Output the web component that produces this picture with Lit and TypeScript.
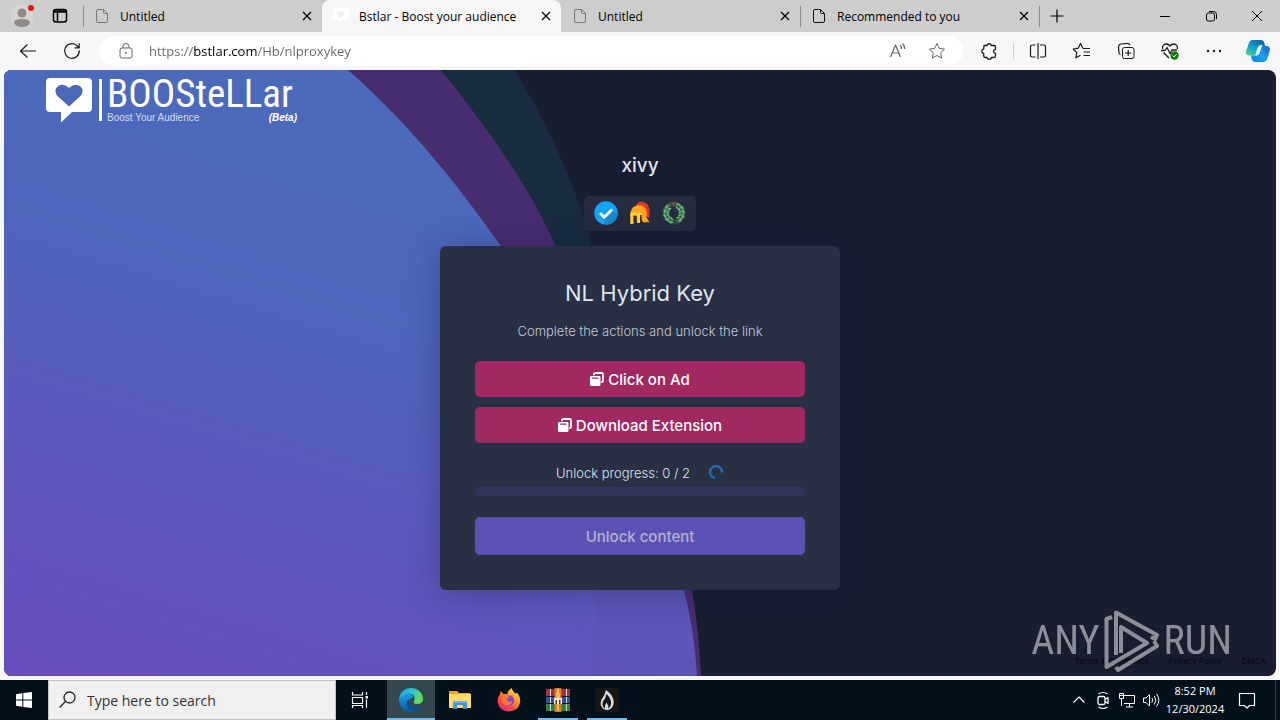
import { LitElement, html, css, svg } from "lit";
import { customElement } from "lit/decorators.js";
import { classMap } from "lit/directives/class-map.js";

const line = (body: unknown, size = 20) => html`
  <svg class="line" width=${size} height=${size} viewBox="0 0 ${size} ${size}" aria-hidden="true">${body}</svg>`;

const icons = {
  file: line(svg`<path d="M2.500 3a1.500 1.500 0 0 1 1.500-1.500h5.500l4 4V13a1.500 1.500 0 0 1-1.500 1.500H4A1.500 1.500 0 0 1 2.500 13zM9.500 1.500V4.500a1 1 0 0 0 1 1H13.500"/>`, 16),
  close: line(svg`<path d="M4 4l8 8M12 4l-8 8" stroke-width="1.200"/>`, 16),
  workspace: line(svg`<rect x="1.500" y="1.500" width="13" height="12.500" rx="2.500" stroke-width="1.500"/><path d="M2 3.500h12" stroke-width="2.500"/><path d="M5.500 4v10" stroke-width="1.500"/>`, 16),
  plus: line(svg`<path d="M8 1.500v13M1.500 8h13" stroke-width="1.200"/>`, 16),
  minimize: line(svg`<path d="M3 8.500h10"/>`, 16),
  restore: line(svg`<rect x="3.500" y="5" width="8" height="8" rx="2"/><path d="M6 3.500h4.500a3 3 0 0 1 3 3V11"/>`, 16),
  windowClose: line(svg`<path d="M3 3l10 10M13 3L3 13"/>`, 16),
  back: line(svg`<path d="M18 10H3M9.500 3.500L2.500 10l7 6.500" stroke-width="1.200"/>`),
  reload: line(svg`<path d="M17.200 9.200A7.300 7.300 0 1 1 14.500 4.300L17.200 6.800M17.200 2.200v4.600h-4.600" stroke-width="1.200"/>`),
  lock: line(svg`<rect x="4" y="7" width="12" height="10" rx="2"/><path d="M7 7V5.500a3 3 0 0 1 6 0V7"/><circle cx="10" cy="12" r="1" fill="currentColor" stroke="none"/>`),
  readAloud: line(svg`<path d="M2.500 16L7.500 4l5 12M4.200 12h6.600M12 4a5 5 0 0 1 1.500 4M14.500 2.500A8 8 0 0 1 16.800 8" stroke-width="1.200"/>`),
  star: line(svg`<path d="M10 2.500l2.300 4.900 5.300.7-3.900 3.700 1 5.300-4.700-2.600-4.700 2.600 1-5.300L2.400 8.100l5.300-.7z"/>`),
  puzzle: line(svg`<path d="M5 4.500h3a2.200 2.200 0 0 1 4.300 0H15a1.500 1.500 0 0 1 1.500 1.500v2.300a2 2 0 0 0-1 3.700l1 .3v2.700a1.500 1.500 0 0 1-1.500 1.500h-2.500a2.300 2.300 0 0 1-4.500 0H6A1.500 1.500 0 0 1 4.700 15v-2.500a2.400 2.400 0 0 1 0-4.700z" stroke-width="1.300"/>`),
  split: line(svg`<path d="M7.500 4H4a1.500 1.500 0 0 0-1.500 1.500v9A1.500 1.500 0 0 0 4 16h3.500M12 4h4a1.500 1.500 0 0 1 1.500 1.500v9A1.500 1.500 0 0 1 16 16h-4M10 2v16" stroke-width="1.200"/>`),
  favorites: line(svg`<path d="M11 7.500L8.500 2.500 6.200 7.200l-5 .8 3.600 3.600-.9 5.200 4.600-2.500M11 7.500h7M11.500 11h6.500M11.500 14.500h6.500" stroke-width="1.200"/>`),
  collections: line(svg`<rect x="6.500" y="6.500" width="11.500" height="11" rx="2"/><path d="M12.200 9v6M9.200 12h6M4.500 13.500A2.500 2.500 0 0 1 3 11.500L2.500 6A3 3 0 0 1 5 3l6-.6A2.500 2.500 0 0 1 13.800 4" stroke-width="1.200"/>`),
  health: line(svg`<path d="M2.700 8C1.800 5 4 3 6.300 3 8 3 9.200 4 10 5c.8-1 2-2 3.700-2C16 3 18.200 5 17.300 8M3.500 11.500L9 17M1 9.500h4l2-3 3 6 2-3.500h5" stroke-width="1.300"/><circle cx="14.500" cy="14.500" r="4.200" fill="#107c10" stroke="none"/><path d="M12.600 14.600l1.400 1.300 2.400-2.600" stroke="#fff"/>`),
  more: line(svg`<g fill="currentColor" stroke="none"><circle cx="4" cy="10" r="1.200"/><circle cx="10" cy="10" r="1.200"/><circle cx="16" cy="10" r="1.200"/></g>`),
  windows: line(svg`<g fill="#fff" stroke="none"><path d="M2 4.200L8.300 3.200V9.500H2zM9.300 3L18 2v7.500H9.300zM2 10.500h6.300v6.300L2 15.800zM9.300 10.500H18V18l-8.700-1z"/></g>`),
  search: line(svg`<circle cx="11.500" cy="7.500" r="5.500" stroke-width="1.300"/><path d="M7.500 11.500L1.500 17.500" stroke-width="1.300"/>`),
  taskView: line(svg`<path d="M2.500 2v3h10V2M2.500 18v-2.500h10V18M2.500 7.500h10v6h-10zM16.500 2v3M16.500 9.500V18" stroke-width="1.200"/><rect x="15.500" y="6" width="2.500" height="2.500" fill="#fff" stroke="none"/>`),
  chevron: line(svg`<path d="M4.500 12.500L10 7l5.500 5.500" stroke-width="1.200"/>`),
  camera: line(svg`<rect x="5" y="6.500" width="7" height="8" rx="1.500" stroke-width="1.300"/><path d="M12 9.500l3-2v6l-3-2M5.500 4q4.500-3 9 0M5.500 17q4.500 3 9 0" stroke-width="1.200"/>`),
  network: line(svg`<path d="M7 5.500h10.500v8H7M12.500 13.500V17M9 17h7M4.500 8.500V16" /><rect x="2.500" y="3.500" width="4" height="5"/><path d="M3 5.500h3"/>`),
  volume: line(svg`<path d="M2.500 8v4.500H5l3.500 3.500V4.500L5 8zM11 8q1.500 2.200 0 4.500M13.300 6q3 4.200 0 8.500M15.600 4q4.500 6.200 0 12.500"/>`),
  message: line(svg`<path d="M2.500 3.500h15v12h-4.800L10 18l-2.700-2.500H2.500z" stroke-width="1.200"/>`),
};

const copilot = html`
  <svg width="26" height="26" viewBox="0 0 26 26" aria-hidden="true">
    <defs>
      <linearGradient id="cpa" x1="0" y1="1" x2=".7" y2="0"><stop stop-color="#5fd38a"/><stop offset=".45" stop-color="#16a9c9"/><stop offset="1" stop-color="#0a64ad"/></linearGradient>
      <linearGradient id="cpb" x1="1" y1="0" x2="0" y2="1"><stop stop-color="#1b5fd0"/><stop offset=".5" stop-color="#1fa0f0"/><stop offset="1" stop-color="#0d83df"/></linearGradient>
    </defs>
    <path fill="url(#cpa)" d="M8 2h8q2.500 0 3.300 3l.8 3H16q-2.500 0-3.300 3L11 17.500H4.500Q0 17.500 1.300 12.500L4 4.800Q5 2 8 2z"/>
    <path fill="url(#cpb)" d="M18 24h-8q-2.500 0-3.300-3L6 17.500h4q2.500 0 3.300-3L15.500 8H21q4.800 0 3.700 5l-2.500 8Q21 24 18 24z"/>
    <path fill="#e8f8ff" d="M13 9q.9-2 3-2h1.500l-3 8q-.9 2.500-3 2.500H10z"/>
  </svg>`;

const adIcon = html`
  <svg width="14" height="14" viewBox="0 0 14 14" aria-hidden="true">
    <path d="M4 3.300V2.300A1.300 1.300 0 0 1 5.300 1h6.400A1.300 1.300 0 0 1 13 2.300v6.400A1.300 1.300 0 0 1 11.700 10h-.5" fill="none" stroke="#fff" stroke-width="1.800"/>
    <path fill="#fff" fill-rule="evenodd" d="M1.500 4h7.600q1.400 0 1.400 1.400v7.100q0 1.500-1.400 1.500H1.500Q0 14 0 12.500V5.400Q0 4 1.500 4zM2 5.600v1.200h6.500V5.600z"/>
  </svg>`;

const badges = [
  html`<svg width="24" height="24" viewBox="0 0 24 24" role="img" aria-label="Verified"><circle cx="12" cy="12" r="11.700" fill="#15a4f5"/><path d="M23.700 12A11.700 11.700 0 0 1 12 23.700L9.500 17.500 19 9z" fill="#168bd0"/><path d="M6 12l4.300 4.200L18 8.500" fill="none" stroke="#fff" stroke-width="2.800"/></svg>`,
  html`<svg width="24" height="24" viewBox="0 0 24 24" role="img" aria-label="Warrior">
    <path d="M8 4.500Q10 .3 14 .5q7 1 7.500 9 .3 5-.5 8l-2-3z" fill="#d83a28"/>
    <path d="M8 4.500Q14 2 17.500 6.500 20 10 19.500 17L17 13z" fill="#f26a26"/>
    <path d="M2.500 23V11.500Q3.500 4.500 10.500 4.500q6.500.3 7.500 7.500l.5 4.500 3 4.500-6 .5-2-3V12.500H10v5L8.500 19v-5H5.500v8.500z" fill="#ffa51f"/>
    <path d="M2.500 11.500h4.800l2.700 2V12h4v4h-2v6H9v-7H5.500v7.500l-3 .5z" fill="#ffd42e"/>
    <path d="M5.500 14.500h3V21h-3zM12 14h1.500v7H12z" fill="#3a3138"/>
  </svg>`,
  html`<svg width="24" height="24" viewBox="0 0 24 24" role="img" aria-label="Laurel">
    <circle cx="12" cy="12" r="9" fill="none" stroke="#394a45" stroke-width="5"/>
    <circle cx="12" cy="3" r="2" fill="#6f4a45"/>
    <path d="M9 20.500Q2.500 17 4 10 5 6 8 3.500M15 20.500Q21.500 17 20 10 19 6 16 3.500" fill="none" stroke="#2f8f55" stroke-width="1.500"/>
    <g fill="#6cb87c">${[-150, -122, -94, -66, -38, 38, 66, 94, 122, 150].map(
      (a) => svg`<g transform="rotate(${a} 12 12)"><ellipse cx="10" cy="2.600" rx="2.300" ry="1" transform="rotate(-25 10 2.600)"/><ellipse cx="11" cy="6" rx="1.900" ry=".9" transform="rotate(25 11 6)"/></g>`
    )}</g>
  </svg>`,
];

const apps = [
  { name: "Microsoft Edge", state: "active", art: svg`
    <defs>
      <linearGradient id="ed1" x1="0" y1="0" x2="1" y2=".4"><stop stop-color="#1b9de2"/><stop offset=".5" stop-color="#2fc2d8"/><stop offset="1" stop-color="#62dc5a"/></linearGradient>
      <linearGradient id="ed2" x1="0" y1="0" x2="0" y2="1"><stop stop-color="#1ba0e8"/><stop offset="1" stop-color="#0c59a4"/></linearGradient>
    </defs>
    <path fill="url(#ed2)" d="M0 12Q1 6 7 5.500q7-.5 7.500 5-2-2-4 1.500-1 6 5 7 3 .4 6.500-1.500Q18 24.500 11 24 1 23 0 12z"/>
    <path fill="#0d4d8e" d="M8 12q-2 9 6 11.500Q19 23 22 17.500q-3.500 2-6.500 1.500-5-1-5-7z"/>
    <path fill="url(#ed1)" d="M0 12Q1 0 12.500 0 22 .5 24 10q.5 6-6 6-4.500 0-3-3 2.500-6.500-5-7.500Q3 5.500 0 12z"/>` },
  { name: "File Explorer", state: "", art: svg`
    <path fill="#e9a92b" d="M1 3h8l2 2h11v14H1z"/><path fill="#ffd869" d="M1 6h22v14H1z"/>
    <path fill="#3d96d8" d="M5 13h14v8h-4v-4H9v4H5z"/><path fill="#65b5ea" d="M5 13h14v2H5z"/>` },
  { name: "Firefox", state: "", art: svg`
    <defs><linearGradient id="ff" x1=".9" y1="0" x2=".2" y2="1"><stop stop-color="#fff04a"/><stop offset=".4" stop-color="#ff9a20"/><stop offset=".7" stop-color="#ff4a45"/><stop offset="1" stop-color="#e3247e"/></linearGradient></defs>
    <path fill="url(#ff)" d="M3.500 3l3 3h4q0-3 4-6 1 3.500 4 5.500l2-.5Q24 10 23 15q-2 8-11 8.500Q2 23 .7 14 .3 9 3 6.500z"/>
    <circle cx="12" cy="12.500" r="5.200" fill="#8146d8"/><path fill="#ff7a2b" d="M5 9q5-3 7.500 0L9.500 11q1 4 6 2-2 6-8 3.500Q4.500 14 5 9z"/>` },
  { name: "WinRAR", state: "running", art: svg`
    <path fill="#a62c40" d="M0 1h24v7H0z"/><path fill="#334e9e" d="M0 9h24v6H0z"/><path fill="#2f7f3d" d="M0 16h24v7H0z"/>
    <path stroke="#d8d8c8" d="M4.500 1v22M20.500 1v22" stroke-width="1"/><path stroke="#101820" d="M0 8.500h24M0 15.500h24"/>
    <path fill="#d97d26" d="M8.500 0h7v24h-7z"/><path fill="#f0bb62" d="M11 1h2v22h-2z"/>
    <path fill="#f5ead0" d="M8 10h8v6H8z"/><path fill="#5a3518" d="M9.500 12H11v4H9.500zM13 12h1.500v4H13z"/><path fill="#f0bb62" d="M10 5h4v5h-4z"/>` },
  { name: "Flame", state: "running", art: svg`
    <rect width="24" height="24" fill="#161616"/>
    <path fill="#d9d9d9" d="M11 2Q17 6 18.500 12q1 6-3 9-3.500 2-7 0-4.500-4-2-9.500Q10 7 11 2z"/>
    <path fill="#161616" d="M11.500 6Q16 10 16 15q0 4-3 5.500 1-3-1.500-6-2 2-1.500 6-3.500-2.500-2-7 3-4 3.500-7.500z"/>` },
];

const tabs = [
  { title: "Untitled", active: false, muted: true },
  { title: "Bstlar - Boost your audience", active: true, muted: false },
  { title: "Untitled", active: false, muted: true },
  { title: "Recommended to you", active: false, muted: false },
];

@customElement("app-root")
export class AppRoot extends LitElement {
  static styles = css`
    :host {
      display: flex;
      flex-direction: column;
      min-height: 100vh;
      background: #f7f7f7;
      font-family: "Open Sans", "Noto Sans", sans-serif;
      font-size: 12px;
      color: #000;
    }
    * { box-sizing: border-box; }
    button, input { font: inherit; color: inherit; border: 0; background: none; padding: 0; margin: 0; outline: 0; }
    button { display: flex; align-items: center; justify-content: center; flex: none; }
    svg { display: block; flex: none; }
    .line { fill: none; stroke: currentColor; stroke-width: 1; stroke-linejoin: round; }

    .strip { display: flex; height: 32px; background: #cdcdcd; }
    .profile { width: 44px; }
    .workspaces { width: 32px; }
    .tabs { display: flex; flex: 1; min-width: 0; padding-left: 7px; }
    .tab { flex: 0 1 239px; min-width: 0; display: flex; align-items: center; gap: 10px; padding: 0 7px 0 10px; border-left: 1px solid transparent; }
    .tab.ruled { border-image: linear-gradient(transparent 20%, #8b8b8b 20% 82%, transparent 82%) 1; }
    .tab.active { background: #f7f7f7; border-radius: 8px 8px 0 0; }
    .tab-title { flex: 1; overflow: hidden; white-space: nowrap; }
    .tab-icon { color: #111; }
    .tab-icon.muted { color: #777; }
    .new-tab { width: 35px; border-left: 1px solid; border-image: linear-gradient(transparent 20%, #8b8b8b 20% 82%, transparent 82%) 1; }
    .control { width: 46px; }

    .toolbar { display: flex; align-items: center; height: 38px; padding-left: 6px; color: #1a1a1a; }
    .tool { width: 44px; height: 32px; }
    .copilot { width: 44px; }
    .address { flex: 1; display: flex; align-items: center; height: 30px; margin: 0 4px 0 6px; padding: 0 16px; border-radius: 15px; background: #fff; color: #666; }
    .url {
      flex: 1; min-width: 0; height: 24px; margin-left: 13px; font-size: 13px;
      color: transparent; -webkit-background-clip: text; background-clip: text;
      background-image: linear-gradient(90deg, #666 45px, #000 45px 108px, #666 108px);
    }
    .address button + button { margin-left: 19px; }
    .rule { width: 1px; height: 16px; margin: 0 2px; background: #ccc; }

    .page { flex: 1; display: grid; margin: 0 4px 4px; border-radius: 8px; overflow: hidden; background: #181d30; position: relative; font-family: Inter, "Open Sans", sans-serif; color: #dfe3ee; }
    .backdrop { grid-area: 1 / 1; width: 100%; height: 100%; min-height: 0; contain: size; }
    .content { grid-area: 1 / 1; display: flex; flex-direction: column; align-items: center; }
    .brand { align-self: flex-start; display: flex; height: 60px; margin-left: 41px; padding-top: 8px; gap: 4px; color: #fff; text-decoration: none; }
    .brand-text { display: flex; flex-direction: column; width: 190px; }
    .brand-name { height: 34px; font: 39px/32px "Roboto Condensed", "Liberation Sans Narrow", "DejaVu Sans Condensed", sans-serif; }
    .brand-sub { display: flex; justify-content: space-between; font: 10px/12px "Liberation Sans", sans-serif; color: #d5dcf2; }
    .beta { font-style: italic; font-weight: bold; color: #fff; }
    .user { margin: 20px 0 0; height: 32px; font-size: 19px; line-height: 32px; font-weight: 500; }
    .badges { display: flex; gap: 10px; margin: 14px 0 15px; padding: 5px 10px 6px; border-radius: 5px; background: #272b40; }
    .card { width: 400px; max-width: 100%; padding: 31px 35px 35px; border-radius: 6px; background: #293044; box-shadow: 0 4px 32px rgba(20, 24, 60, .35); text-align: center; }
    .card h2 { margin: 0 0 12px; font-size: 22px; line-height: 32px; font-weight: 400; }
    .card p { margin: 0 0 20px; font-size: 13px; line-height: 20px; font-weight: 300; color: #c3c8d6; }
    .action { width: 100%; height: 36px; margin-bottom: 10px; gap: 4px; border-radius: 5px; background: #9f2960; color: #fff; font-size: 15px; font-weight: 500; }
    .status { display: flex; align-items: center; justify-content: center; gap: 18px; height: 20px; margin-top: 20px; font-size: 13px; font-weight: 300; }
    progress { display: block; width: 100%; height: 9px; margin: 4px 0 21px; appearance: none; -webkit-appearance: none; border: 0; }
    progress::-webkit-progress-bar { background: #33345b; border-radius: 4px; }
    progress::-webkit-progress-value { background: #5d53b4; }
    .unlock { width: 100%; height: 38px; border-radius: 5px; background: #5b52b3; color: #b3b0cf; font-size: 15px; font-weight: 500; }
    .footer { grid-area: 1 / 1; align-self: end; justify-self: end; display: flex; gap: 20px; padding: 0 10px 10px 0; font-size: 8px; line-height: 10px; }
    .footer a { color: #05060c; text-decoration: none; }
    .watermark { position: absolute; right: 44px; bottom: 4px; display: flex; align-items: center; gap: 4px; color: #fff; opacity: .5; font: 40px/62px "Roboto Condensed", "Liberation Sans Narrow", "DejaVu Sans Condensed", sans-serif; }

    .taskbar { display: flex; height: 40px; background: #02101c; color: #fff; }
    .start { width: 48px; }
    .search { display: flex; align-items: center; gap: 9px; flex: 0 1 288px; padding-left: 9px; background: #f0f0f0; border: 1px solid #c4c4bc; color: #222; }
    .search input { flex: 1; min-width: 0; height: 30px; font-size: 14px; }
    .search input::placeholder { color: #333; opacity: 1; }
    .task-view { width: 48px; }
    .apps { display: flex; gap: 1px; margin-left: 3px; flex: 1; }
    .app { width: 48px; height: 40px; }
    .app.active { background: #34494f linear-gradient(#76b9ed, #76b9ed) bottom / 100% 2px no-repeat; }
    .app.running { background: linear-gradient(#76b9ed, #76b9ed) bottom / 40px 2px no-repeat; }
    .tray { display: flex; align-items: center; margin-right: 4px; padding-right: 8px; border-right: 1px solid #34404a; }
    .tray-item { width: 24px; height: 40px; }
    .clock { width: 64px; flex-direction: column; height: 40px; font-size: 11px; line-height: 18px; white-space: nowrap; }
    .notice { width: 40px; height: 40px; }
  `;

  render() {
    return html`
      <header class="strip">
        <button class="profile" aria-label="Profile">
          <svg width="28" height="28" viewBox="0 0 28 28" aria-hidden="true"><circle cx="14" cy="14" r="11.500" fill="#d8d4d1"/><circle cx="14" cy="11" r="4.500" fill="#8e8a87"/><path d="M6 21q0-4 8-4t8 4q-2 4-8 4t-8-4z" fill="#8e8a87"/><circle cx="23" cy="6" r="3" fill="#e3141e"/></svg>
        </button>
        <button class="workspaces" aria-label="Tab actions">${icons.workspace}</button>
        <nav class="tabs" aria-label="Tabs">
          ${tabs.map((t, i) => html`
            <div class=${classMap({ tab: true, active: t.active, ruled: i === 0 || i === 3 })}>
              ${t.active
                ? html`<svg width="16" height="16" viewBox="0 0 16 16" aria-hidden="true"><path d="M1 0h14q1 0 1 1v10q0 1-1 1H9l-4 4v-4H1q-1 0-1-1V1q0-1 1-1z" fill="#fff"/><path d="M8 9.500L4 5.500q0-3 4-1.500 4-1.500 4 1.500z" fill="#f0f0f0"/></svg>`
                : html`<span class="tab-icon ${t.muted ? "muted" : ""}">${icons.file}</span>`}
              <span class="tab-title">${t.title}</span>
              <button aria-label="Close tab">${icons.close}</button>
            </div>`)}
          <button class="new-tab" aria-label="New tab">${icons.plus}</button>
        </nav>
        <button class="control" aria-label="Minimize">${icons.minimize}</button>
        <button class="control" aria-label="Restore">${icons.restore}</button>
        <button class="control" aria-label="Close window">${icons.windowClose}</button>
      </header>

      <div class="toolbar">
        <button class="tool" aria-label="Back">${icons.back}</button>
        <button class="tool" aria-label="Refresh">${icons.reload}</button>
        <div class="address">
          <button aria-label="Site information">${icons.lock}</button>
          <input class="url" aria-label="Address" spellcheck="false" .value=${"https://bstlar.com/Hb/nlproxykey"} />
          <button aria-label="Read aloud">${icons.readAloud}</button>
          <button aria-label="Add to favorites">${icons.star}</button>
        </div>
        <button class="tool" aria-label="Extensions">${icons.puzzle}</button>
        <span class="rule"></span>
        <button class="tool" aria-label="Split screen">${icons.split}</button>
        <button class="tool" aria-label="Favorites">${icons.favorites}</button>
        <button class="tool" aria-label="Collections">${icons.collections}</button>
        <button class="tool" aria-label="Browser essentials">${icons.health}</button>
        <button class="tool" aria-label="Settings and more">${icons.more}</button>
        <button class="copilot" aria-label="Copilot">${copilot}</button>
      </div>

      <main class="page">
        <svg class="backdrop" viewBox="0 0 1272 606" preserveAspectRatio="xMidYMid slice" aria-hidden="true">
          <defs><linearGradient id="sky" x1="420" y1="60" x2="230" y2="680" gradientUnits="userSpaceOnUse"><stop stop-color="#4b6aba"/><stop offset=".3" stop-color="#4f66bb"/><stop offset=".65" stop-color="#5d58bd"/><stop offset="1" stop-color="#6a4dbf"/></linearGradient></defs>
          <path fill="#182b3f" d="M-400 0H511C555 75 570 115 588 175Q630 340 595 520L586 606H-400z"/>
          <path fill="#482d70" d="M-400 0H437C490 66 530 125 551 175C620 290 670 410 688 520Q695 560 697 606H-400z"/>
          <path fill="url(#sky)" d="M-400 0H344C400 49 450 109 496 175C580 300 652 400 680 520Q690 560 693 606H-400z"/>
          <path fill="#5e53b4" opacity=".6" d="M596 500H675L680 520Q690 560 693 606H586Q593 560 596 500z"/>
        </svg>
        <div class="content">
          <a class="brand" href="#">
            <svg width="58" height="46" viewBox="0 0 58 46" aria-hidden="true"><path fill="#fff" d="M5 0h38q4 0 4 4v26q0 4-4 4H27L16 44.500V34H5q-4 0-4-4V4q0-4 4-4zM54 1h3v42h-3z"/><path fill="#4b69ba" d="M24 28.500L12.500 18Q8.500 13 12 9q5.500-5 12 1 6.500-6 12-1 3.500 4-.5 9z"/></svg>
            <span class="brand-text"><span class="brand-name">BOOSteLLar</span><span class="brand-sub"><span>Boost Your Audience</span><span class="beta">(Beta)</span></span></span>
          </a>
          <h1 class="user">xivy</h1>
          <div class="badges">${badges}</div>
          <section class="card">
            <h2>NL Hybrid Key</h2>
            <p>Complete the actions and unlock the link</p>
            <button class="action">${adIcon}Click on Ad</button>
            <button class="action">${adIcon}Download Extension</button>
            <div class="status">
              <label for="unlock-progress">Unlock progress: 0 / 2</label>
              <svg width="16" height="16" viewBox="0 0 16 16" aria-hidden="true"><circle cx="8" cy="7" r="6" fill="none" stroke="#1d3557" stroke-width="2"/><path d="M7 13A6 6 0 1 1 14 7.500" fill="none" stroke="#2869ad" stroke-width="2.500"/></svg>
            </div>
            <progress id="unlock-progress" value="0" max="2"></progress>
            <button class="unlock">Unlock content</button>
          </section>
        </div>
        <footer class="footer"><a href="#">Terms & Conditions</a><a href="#">Privacy Policy</a><a href="#">DMCA</a></footer>
        <div class="watermark">
          <span>ANY</span>
          <svg width="56" height="62" viewBox="0 0 56 62" aria-hidden="true"><g fill="none" stroke="#fff" stroke-width="4" stroke-linejoin="round"><path d="M8 7L2.500 9V57L43 33 17 17V43"/><path d="M12 45V2.500L53 25 51 29 47 27"/><path d="M12 57L14 60 53 36 50 31"/></g></svg>
          <span>RUN</span>
        </div>
      </main>

      <footer class="taskbar">
        <button class="start" aria-label="Start">${icons.windows}</button>
        <label class="search">${icons.search}<input type="text" aria-label="Search" placeholder="Type here to search" /></label>
        <button class="task-view" aria-label="Task view">${icons.taskView}</button>
        <div class="apps">
          ${apps.map((a) => html`<button class="app ${a.state}" aria-label=${a.name}><svg width="24" height="24" viewBox="0 0 24 24" aria-hidden="true">${a.art}</svg></button>`)}
        </div>
        <div class="tray">
          <button class="tray-item" aria-label="Show hidden icons">${icons.chevron}</button>
          <button class="tray-item" aria-label="Meet now">${icons.camera}</button>
          <button class="tray-item" aria-label="Network">${icons.network}</button>
          <button class="tray-item" aria-label="Volume">${icons.volume}</button>
          <button class="clock"><span>8:52 PM</span><span>12/30/2024</span></button>
          <button class="notice" aria-label="Notifications">${icons.message}</button>
        </div>
      </footer>
    `;
  }
}
